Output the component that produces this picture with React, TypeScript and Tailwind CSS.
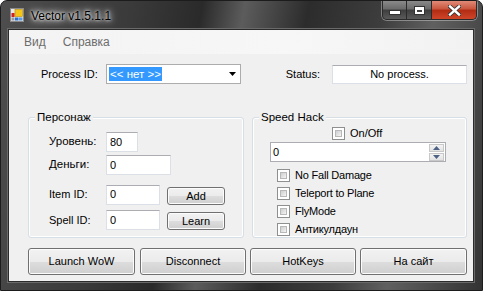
import React from 'react';

const font = "font-['Liberation_Sans',Arial,sans-serif]";

function TextBox({ value, w }: { value: string; w: string }) {
    return (
        <div
            className={`${w} h-[20px] bg-white border border-[#dbdfe6] border-t-[#abadb3] flex items-center pl-[3px] text-[11px] text-black`}
        >
            {value}
        </div>
    );
}

function Button({ label, className }: { label: string; className: string }) {
    return (
        <div
            className={`${className} flex items-center justify-center rounded-[3px] border border-[#707070] bg-[linear-gradient(to_bottom,#f2f2f2_0%,#ebebeb_50%,#dddddd_51%,#cfcfcf_100%)] shadow-[inset_0_0_0_1px_#fcfcfc] text-[11px] text-black`}
        >
            {label}
        </div>
    );
}

function CheckBox() {
    return (
        <div className="w-[13px] h-[13px] border border-[#8e8f8f] bg-white p-[2px]">
            <div className="w-full h-full bg-[linear-gradient(135deg,#cbcfd5_0%,#e0e0e0_50%,#f6f6f6_100%)] border border-[#b8b8b8]" />
        </div>
    );
}

function CheckRow({ label }: { label: string }) {
    return (
        <div className="flex items-center h-[18px] pl-[24px]">
            <CheckBox />
            <span className="ml-[5px] text-[11px] tracking-[-0.2px] text-black">{label}</span>
        </div>
    );
}

function Group({ title, className, children }: { title: string; className: string; children: React.ReactNode }) {
    return (
        <div className={`${className} relative h-[121px] rounded-[3px] border border-[#d5dfe5] shadow-[inset_0_0_0_1px_#fff]`}>
            <span className="absolute left-[6px] top-[-8px] px-[2px] bg-[#f0f0f0] text-[11.5px] leading-[14px] text-black">
                {title}
            </span>
            {children}
        </div>
    );
}

function AppIcon() {
    return (
        <svg width="14" height="14" viewBox="0 0 14 14">
            <rect x="0.5" y="0.5" width="13" height="13" fill="#e8e8e8" stroke="#8a8a8a" />
            <rect x="5" y="1.5" width="7.5" height="7" fill="#f5c518" stroke="#b48a00" strokeWidth="0.6" />
            <rect x="1.5" y="5" width="3" height="4" fill="#d42020" />
            <rect x="5" y="9.5" width="3.5" height="3" fill="#2a70d0" />
            <rect x="9" y="9.5" width="3.5" height="3" fill="#5a9ae0" />
            <rect x="1.5" y="9.5" width="3" height="3" fill="#9a9a9a" />
        </svg>
    );
}

export default function App() {
    return (
        <div
            className={`${font} w-[483px] h-[291px] flex flex-col rounded-t-[7px] border border-[#1c1c1c] bg-[linear-gradient(100deg,#4e4e4e_0%,#3a3a3a_25%,#2a2a2a_38%,#5c5c5c_46%,#2c2c2c_58%,#3d3d3d_72%,#606060_82%,#333333_100%)] overflow-hidden`}
        >
            {/* title bar */}
            <div className="h-[28px] flex items-start shrink-0">
                <div className="ml-[9px] mt-[7px]">
                    <AppIcon />
                </div>
                <span className="ml-[7px] mt-[6px] text-[12px] text-black [text-shadow:0_0_6px_#fff,0_0_10px_#fff,0_0_3px_#fff]">
                    Vector v1.5.1.1
                </span>
                <div className="ml-auto mr-[5px] flex h-[19px] rounded-b-[5px] border border-t-0 border-[#2a2a2a] overflow-hidden shadow-[0_0_0_1px_rgba(255,255,255,0.35)]">
                    <div className="w-[24px] flex items-center justify-center border-r border-[#2a2a2a] bg-[linear-gradient(to_bottom,#8a8a8a_0%,#6a6a6a_45%,#3e3e3e_50%,#5a5a5a_100%)]">
                        <div className="w-[10px] h-[3px] mt-[5px] bg-white border border-[#333] box-content" />
                    </div>
                    <div className="w-[25px] flex items-center justify-center border-r border-[#2a2a2a] bg-[linear-gradient(to_bottom,#8a8a8a_0%,#6a6a6a_45%,#3e3e3e_50%,#5a5a5a_100%)]">
                        <div className="w-[9px] h-[7px] border-2 border-t-[3px] border-white outline outline-1 outline-[#333]" />
                    </div>
                    <div className="w-[44px] flex items-center justify-center bg-[linear-gradient(to_bottom,#e08a78_0%,#c9553c_45%,#b12c13_50%,#d0452a_100%)]">
                        <svg width="13" height="11" viewBox="0 0 13 11">
                            <path d="M2 1.5 L11 9.5 M11 1.5 L2 9.5" stroke="#333" strokeWidth="4" strokeLinecap="square" />
                            <path d="M2 1.5 L11 9.5 M11 1.5 L2 9.5" stroke="#fff" strokeWidth="2.4" strokeLinecap="square" />
                        </svg>
                    </div>
                </div>
            </div>

            {/* client area */}
            <div className="ml-[7px] w-[466px] h-[253px] border border-[#2b2b2b] shadow-[0_0_0_1px_#6a6a6a] bg-[#f0f0f0] flex flex-col text-black">
                {/* menu */}
                <div className="h-[24px] flex items-center bg-[linear-gradient(to_right,#f3f3f3,#f7f7f7_60%,#f2f2f2)] text-[12px] text-[#6d6d6d]">
                    <span className="ml-[15px]">Вид</span>
                    <span className="ml-[17px]">Справка</span>
                </div>

                {/* process row */}
                <div className="mt-[10px] flex items-center h-[20px] text-[11px]">
                    <span className="ml-[32px] w-[65px]">Process ID:</span>
                    <div className="w-[135px] h-[20px] bg-white border border-[#acacac] flex items-center pl-[2px] pr-[4px]">
                        <span className="bg-[#3399ff] text-white px-[1px] text-[11.5px] leading-[14px]">&lt;&lt; нет &gt;&gt;</span>
                        <svg className="ml-auto" width="7" height="4" viewBox="0 0 7 4">
                            <path d="M0 0 H7 L3.5 4 Z" fill="#000" />
                        </svg>
                    </div>
                    <span className="w-[79px] text-right">Status:</span>
                    <div className="ml-[12px] w-[135px] h-[19px] bg-white border border-[#dbdfe6] border-t-[#abadb3] flex items-center justify-center text-[11px]">
                        No process.
                    </div>
                </div>

                {/* groups */}
                <div className="mt-[33px] flex">
                    <Group title="Персонаж" className="ml-[19px] w-[216px]">
                        <div className="flex flex-col pl-[20px] pt-[14px] text-[11.5px]">
                            <div className="flex items-center">
                                <span className="w-[57px]">Уровень:</span>
                                <TextBox value="80" w="w-[32px]" />
                            </div>
                            <div className="flex items-center mt-[3px]">
                                <span className="w-[57px]">Деньги:</span>
                                <TextBox value="0" w="w-[65px]" />
                            </div>
                            <div className="flex items-center mt-[9px]">
                                <span className="w-[57px] text-[11px]">Item ID:</span>
                                <TextBox value="0" w="w-[54px]" />
                                <Button label="Add" className="ml-[7px] mt-[3px] w-[58px] h-[18px]" />
                            </div>
                            <div className="flex items-center mt-[5px]">
                                <span className="w-[57px] text-[11px]">Spell ID:</span>
                                <TextBox value="0" w="w-[54px]" />
                                <Button label="Learn" className="ml-[7px] mt-[2px] w-[58px] h-[18px]" />
                            </div>
                        </div>
                    </Group>
                    <Group title="Speed Hack" className="ml-[8px] w-[215px]">
                        <div className="flex flex-col pt-[9px] text-[11px]">
                            <div className="flex items-center h-[13px] pl-[79px]">
                                <CheckBox />
                                <span className="ml-[5px]">On/Off</span>
                            </div>
                            <div className="ml-[17px] mt-[2px] w-[176px] h-[20px] bg-white border border-[#abadb3] flex items-center">
                                <span className="pl-[2px]">0</span>
                                <div className="ml-auto mr-[1px] flex flex-col gap-[1px]">
                                    <div className="w-[15px] h-[8px] flex items-center justify-center border border-[#c8c8c8] bg-[linear-gradient(to_bottom,#f4f4f4,#e2e2e2)]">
                                        <svg width="7" height="4" viewBox="0 0 7 4"><path d="M0 4 L3.5 0 L7 4 Z" fill="#4d6185" /></svg>
                                    </div>
                                    <div className="w-[15px] h-[8px] flex items-center justify-center border border-[#c8c8c8] bg-[linear-gradient(to_bottom,#f4f4f4,#e2e2e2)]">
                                        <svg width="7" height="4" viewBox="0 0 7 4"><path d="M0 0 H7 L3.5 4 Z" fill="#4d6185" /></svg>
                                    </div>
                                </div>
                            </div>
                            <div className="mt-[4px] flex flex-col">
                                <CheckRow label="No Fall Damage" />
                                <CheckRow label="Teleport to Plane" />
                                <CheckRow label="FlyMode" />
                                <CheckRow label="Антикулдаун" />
                            </div>
                        </div>
                    </Group>
                </div>

                {/* bottom buttons */}
                <div className="mt-[10px] ml-[19px] flex text-[11.5px]">
                    <Button label="Launch WoW" className="w-[107px] h-[27px]" />
                    <Button label="Disconnect" className="ml-[5px] w-[106px] h-[27px]" />
                    <Button label="HotKeys" className="ml-[4px] w-[106px] h-[27px]" />
                    <Button label="На сайт" className="ml-[4px] w-[107px] h-[27px]" />
                </div>
            </div>
        </div>
    );
}
